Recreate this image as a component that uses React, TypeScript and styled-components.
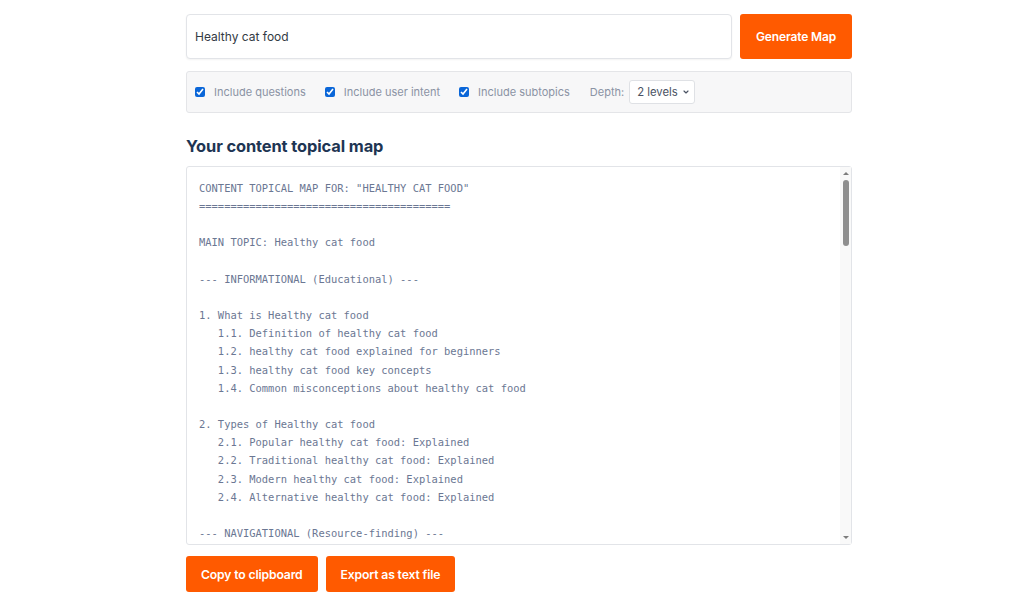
import styled, {createGlobalStyle} from "styled-components";
import {ChevronDown} from "lucide-react";

const GlobalStyle = createGlobalStyle`
  body {
    margin: 0;
    background: #ffffff;
    font-family: "Inter", "Open Sans", sans-serif;
  }
`

const Page = styled.div`
  width: 666px;
  margin-left: calc(50% - 326px);
  padding-top: 14px;
`

const SearchRow = styled.div`
  display: flex;
  gap: 8px;
`

const TopicInput = styled.input`
  flex: 1;
  height: 45px;
  box-sizing: border-box;
  border: 1px solid #e2e4e8;
  border-radius: 4px;
  box-shadow: 0 1px 2px rgba(0,0,0,0.05);
  padding: 0 8px;
  font-family: "Inter", sans-serif;
  font-size: 12px;
  color: #333a44;
  outline: none;
`

const OrangeButton = styled.button`
  background: #ff5a00;
  color: #fff;
  border: none;
  border-radius: 3px;
  font-family: "Inter", sans-serif;
  font-weight: 600;
  font-size: 12.2px;
  letter-spacing: -0.15px;
  white-space: nowrap;
  padding: 0 15px;
  cursor: pointer;
`

const GenerateButton = styled(OrangeButton)`
  width: 112px;
  height: 45px;
  padding: 0;
  font-size: 12px;
`

const Options = styled.div`
  margin-top: 12px;
  height: 42px;
  box-sizing: border-box;
  background: #f7f7f8;
  border: 1px solid #e4e5e8;
  border-radius: 3px;
  display: flex;
  align-items: center;
  padding: 0 8px;
  gap: 19px;
`

const CheckLabel = styled.label`
  display: flex;
  align-items: center;
  gap: 9px;
  font-size: 11px;
  color: #8b93a4;

  & input {
    margin: 0;
    width: 10px;
    height: 10px;
    accent-color: #0a66d8;
  }
`

const DepthWrap = styled.div`
  display: flex;
  align-items: center;
  gap: 5px;
  margin-left: 1px;
  font-size: 11px;
  color: #8b93a4;
`

const SelectBox = styled.div`
  position: relative;
  display: flex;

  & svg {
    position: absolute;
    right: 5px;
    top: 8px;
    color: #4a5263;
    pointer-events: none;
  }
`

const DepthSelect = styled.select`
  appearance: none;
  height: 24px;
  width: 66px;
  border: 1px solid #dfe1e5;
  border-radius: 3px;
  background: #fff;
  font-family: "Inter", sans-serif;
  font-size: 11.3px;
  color: #4a5263;
  padding: 0 0 0 7px;
`

const Heading = styled.h2`
  margin: 23px 0 10px;
  font-size: 16.4px;
  font-weight: 700;
  color: #1e3553;
  letter-spacing: -0.1px;
`

const MapBox = styled.div`
  position: relative;
`

const MapText = styled.textarea`
  display: block;
  width: 100%;
  height: 379px;
  box-sizing: border-box;
  resize: none;
  border: 1px solid #e2e4e8;
  border-radius: 3px;
  padding: 12px 12px;
  font-family: "DejaVu Sans Mono", "Liberation Mono", monospace;
  font-size: 10.45px;
  line-height: 18.15px;
  color: #6b7793;
  outline: none;
  white-space: pre;
  overflow: hidden;
`

const ScrollTrack = styled.div`
  position: absolute;
  top: 1px;
  right: 1px;
  bottom: 1px;
  width: 11px;
  background: #f9f9f9;
  display: flex;
  flex-direction: column;
  align-items: center;
`

const Arrow = styled.div<{$down?: boolean}>`
  width: 0;
  height: 0;
  margin: ${p => (p.$down ? "auto 0 5px" : "5px 0 0")};
  border-left: 3px solid transparent;
  border-right: 3px solid transparent;
  ${p => (p.$down ? "border-top: 3px solid #7d7d7d;" : "border-bottom: 3px solid #7d7d7d;")}
`

const Thumb = styled.div`
  width: 6px;
  height: 66px;
  margin-top: 5px;
  background: #8f8f8f;
  border-radius: 3px;
`

const ActionRow = styled.div`
  display: flex;
  gap: 8px;
  margin-top: 11px;
`

const ActionButton = styled(OrangeButton)`
  height: 36px;
`

const sections: [string, string[]][] = [
  ["What is Healthy cat food", [
    "Definition of healthy cat food",
    "healthy cat food explained for beginners",
    "healthy cat food key concepts",
    "Common misconceptions about healthy cat food",
  ]],
  ["Types of Healthy cat food", [
    "Popular healthy cat food: Explained",
    "Traditional healthy cat food: Explained",
    "Modern healthy cat food: Explained",
    "Alternative healthy cat food: Explained",
  ]],
]

const navSections: [string, string[]][] = [
  ["Best resources for Healthy cat food", [
    "Top healthy cat food websites",
    "healthy cat food guides and tutorials",
    "healthy cat food communities and forums",
    "healthy cat food experts to follow",
  ]],
  ["Healthy cat food near me", [
    "Where to find healthy cat food locally",
    "healthy cat food stores and shops",
    "Online healthy cat food directories",
  ]],
]

const comSections: [string, string[]][] = [
  ["Best Healthy cat food", [
    "Top 10 healthy cat food options",
    "healthy cat food reviews",
    "healthy cat food comparisons",
    "healthy cat food for different budgets",
  ]],
  ["Healthy cat food vs alternatives", [
    "healthy cat food pros and cons",
    "Is healthy cat food worth it?",
    "healthy cat food alternatives compared",
  ]],
]

const trSections: [string, string[]][] = [
  ["Buy Healthy cat food", [
    "Where to buy healthy cat food",
    "healthy cat food deals and discounts",
    "healthy cat food pricing guide",
    "How to choose healthy cat food",
  ]],
]

const renderBlock = (title: string, list: [string, string[]][], start: number) => {
  let out = `--- ${title} ---\n\n`
  list.forEach(([head, subs], i) => {
    const n = start + i
    out += `${n}. ${head}\n`
    subs.forEach((s, j) => {
      out += `   ${n}.${j + 1}. ${s}\n`
    })
    out += "\n"
  })
  return out
}

const buildMap = () => {
  let text = `CONTENT TOPICAL MAP FOR: "HEALTHY CAT FOOD"\n`
  text += "=".repeat(40) + "\n\n"
  text += "MAIN TOPIC: Healthy cat food\n\n"
  text += renderBlock("INFORMATIONAL (Educational)", sections, 1)
  text += renderBlock("NAVIGATIONAL (Resource-finding)", navSections, 3)
  text += renderBlock("COMMERCIAL (Research before purchase)", comSections, 5)
  text += renderBlock("TRANSACTIONAL (Ready to act)", trSections, 7)
  text += "--- QUESTIONS ---\n\n"
  ;[
    "What is healthy cat food?",
    "How does healthy cat food work?",
    "Why is healthy cat food important?",
    "When should I use healthy cat food?",
    "Where can I find healthy cat food?",
    "Who needs healthy cat food?",
    "How much does healthy cat food cost?",
    "Is healthy cat food safe for kittens?",
  ].forEach(q => (text += `- ${q}\n`))
  text += "\n--- USER INTENT SUMMARY ---\n\n"
  text += "Informational: 2 topics\nNavigational: 2 topics\nCommercial: 2 topics\nTransactional: 1 topic\n"
  return text
}

const App = () => {
  return (
    <Page>
      <GlobalStyle />
      <SearchRow>
        <TopicInput defaultValue="Healthy cat food" />
        <GenerateButton>Generate Map</GenerateButton>
      </SearchRow>
      <Options>
        <CheckLabel><input type="checkbox" defaultChecked /> Include questions</CheckLabel>
        <CheckLabel><input type="checkbox" defaultChecked /> Include user intent</CheckLabel>
        <CheckLabel><input type="checkbox" defaultChecked /> Include subtopics</CheckLabel>
        <DepthWrap>
          Depth:
          <SelectBox>
            <DepthSelect defaultValue="2">
              <option value="1">1 level</option>
              <option value="2">2 levels</option>
              <option value="3">3 levels</option>
            </DepthSelect>
            <ChevronDown size={8} strokeWidth={3.5} />
          </SelectBox>
        </DepthWrap>
      </Options>
      <Heading>Your content topical map</Heading>
      <MapBox>
        <MapText readOnly value={buildMap()} />
        <ScrollTrack>
          <Arrow />
          <Thumb />
          <Arrow $down />
        </ScrollTrack>
      </MapBox>
      <ActionRow>
        <ActionButton>Copy to clipboard</ActionButton>
        <ActionButton>Export as text file</ActionButton>
      </ActionRow>
    </Page>
  )
}

export default App
